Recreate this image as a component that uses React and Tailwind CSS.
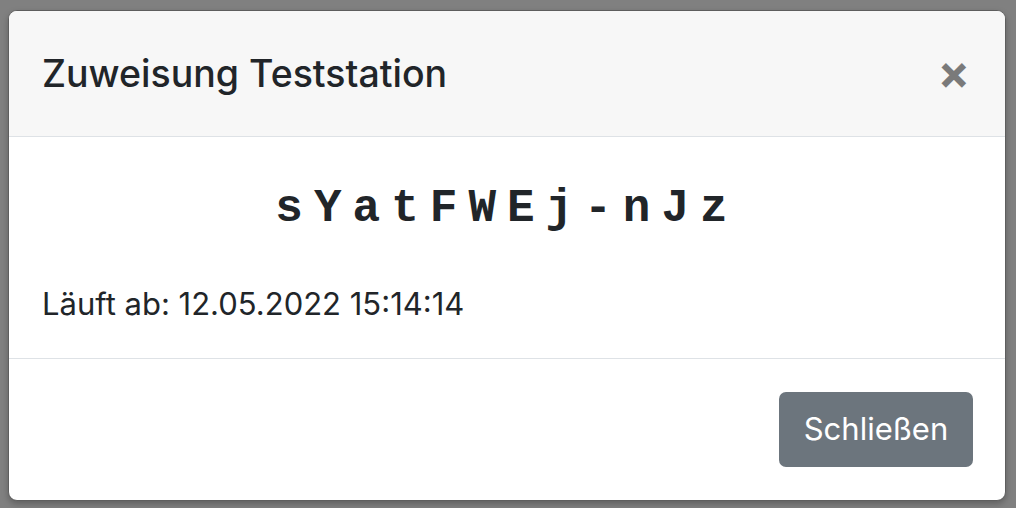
import React from "react";

// Modal showing a generated station code with expiry time
function AssignModal() {
    const code = "sYatFWEj-nJz";
    const expires = "12.05.2022 15:14:14";

    return (
        <div className="w-[998px] rounded-[9px] border border-[#5e5e5e] bg-white shadow-[0_3px_6px_rgba(0,0,0,0.25)] overflow-hidden">
            <div className="h-[126px] flex items-center justify-between pl-[33px] pr-[35px] bg-[#f7f7f7] border-b border-[#dee2e6]">
                <h5 className="text-[37.5px] leading-[50px] font-medium text-[#212529]">
                    Zuweisung Teststation
                </h5>
                <button className="text-[48px] leading-none font-bold text-black opacity-50 mt-[-4px]">
                    ×
                </button>
            </div>
            <div className="h-[222px] pt-[34px] px-[33px] border-b border-[#dee2e6]">
                <div className="text-center font-['Liberation_Mono',monospace] font-bold text-[46px] leading-[76px] tracking-[11px] text-[#212529]">
                    {code}
                </div>
                <p className="mt-[33px] text-[31px] leading-[48px] text-[#212529]">
                    Läuft ab: {expires}
                </p>
            </div>
            <div className="h-[141px] flex items-center justify-end pr-[32px]">
                <button className="h-[75px] w-[194px] rounded-[7px] bg-[#6c757d] text-white text-[31px]">
                    Schließen
                </button>
            </div>
        </div>
    );
}

export default function App() {
    return (
        <div className="w-[1016px] h-[508px] bg-[#808080] pt-[10px] pl-[8px] font-['Inter',sans-serif]">
            <AssignModal />
        </div>
    );
}
